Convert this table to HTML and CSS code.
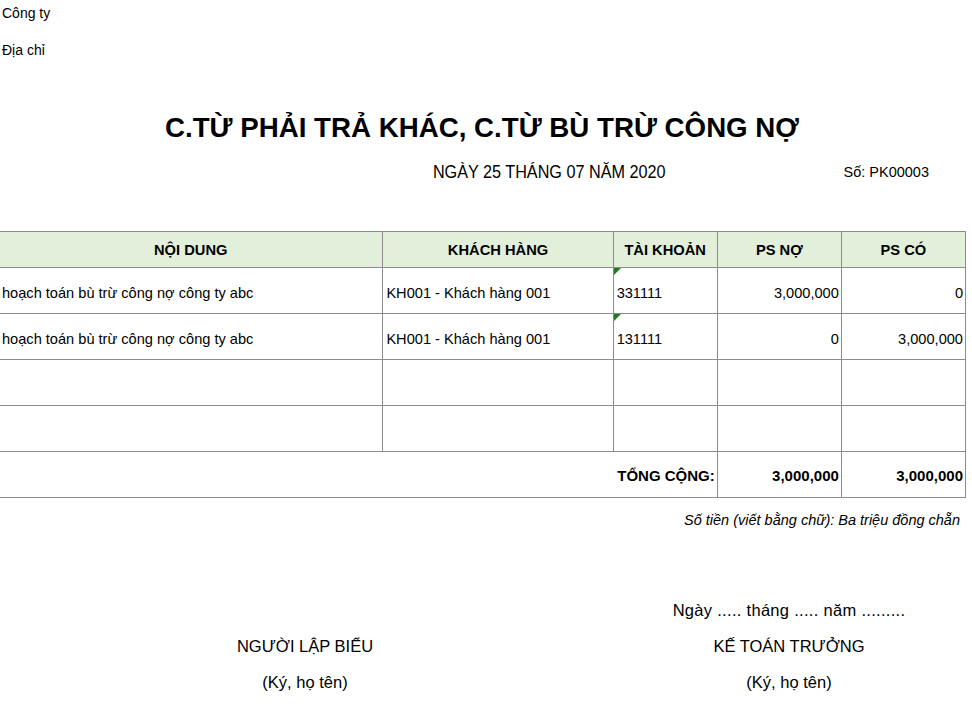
FILE: index.html
```html
<!DOCTYPE html>
<html>
<head>
    <meta charset="utf-8">
    <title>C.TỪ PHẢI TRẢ KHÁC, C.TỪ BÙ TRỪ CÔNG NỢ</title>
    <link rel="stylesheet" href="styles.css">
</head>
<body>
    <div class="sheet">
        <div class="info">Công ty</div>
        <div class="info info-2">Địa chỉ</div>

        <h1 class="title">C.TỪ PHẢI TRẢ KHÁC, C.TỪ BÙ TRỪ CÔNG NỢ</h1>

        <div class="meta">
            <div class="date"><span class="narrow">NGÀY 25 THÁNG 07 NĂM 2020</span></div>
            <div class="voucher">Số: PK00003</div>
        </div>

        <table class="grid">
            <colgroup>
                <col class="c-content">
                <col class="c-customer">
                <col class="c-account">
                <col class="c-money">
                <col class="c-money">
            </colgroup>
            <thead>
                <tr>
                    <th>NỘI DUNG</th>
                    <th>KHÁCH HÀNG</th>
                    <th>TÀI KHOẢN</th>
                    <th>PS NỢ</th>
                    <th>PS CÓ</th>
                </tr>
            </thead>
            <tbody>
                <tr>
                    <td>hoạch toán bù trừ công nợ công ty abc</td>
                    <td>KH001 - Khách hàng 001</td>
                    <td class="acct">331111</td>
                    <td class="num">3,000,000</td>
                    <td class="num">0</td>
                </tr>
                <tr>
                    <td>hoạch toán bù trừ công nợ công ty abc</td>
                    <td>KH001 - Khách hàng 001</td>
                    <td class="acct">131111</td>
                    <td class="num">0</td>
                    <td class="num">3,000,000</td>
                </tr>
                <tr>
                    <td></td><td></td><td></td><td></td><td></td>
                </tr>
                <tr>
                    <td></td><td></td><td></td><td></td><td></td>
                </tr>
                <tr class="total">
                    <td colspan="3" class="num">TỔNG CỘNG:</td>
                    <td class="num">3,000,000</td>
                    <td class="num">3,000,000</td>
                </tr>
            </tbody>
        </table>

        <div class="words">Số tiền (viết bằng chữ): Ba triệu đồng chẵn</div>

        <div class="signs">
            <div class="sign-left">
                <p class="sign-date">&nbsp;</p>
                <p>NGƯỜI LẬP BIỂU</p>
                <p class="sign-note">(Ký, họ tên)</p>
            </div>
            <div class="sign-right">
                <p class="sign-date">Ngày ..... tháng ..... năm .........</p>
                <p>KẾ TOÁN TRƯỞNG</p>
                <p class="sign-note">(Ký, họ tên)</p>
            </div>
        </div>
    </div>
</body>
</html>
```

FILE: styles.css
```css
* {
    margin: 0;
    padding: 0;
}
body {
    background: #fff;
    color: #000;
    font-family: "Liberation Sans", Arial, sans-serif;
    font-size: 14px;
}
.sheet {
    width: 968px;
    margin-left: -2px;
}
/* khong co font Arial Narrow, ep chu lai */
.narrow {
    display: inline-block;
    transform: scaleX(.9);
}

/* dau trang */
.info {
    height: 26px;
    line-height: 26px;
    padding-left: 4px;
}
.info-2 {
    margin-top: 11px;
}
.title {
    margin-top: 45px;
    height: 40px;
    line-height: 40px;
    text-align: center;
    font-size: 27.7px;
    font-weight: bold;
}
.meta {
    display: grid;
    grid-template-columns: 384px 334px 250px;
    margin-top: 12px;
    height: 24px;
    line-height: 24px;
}
.date {
    grid-column: 2;
    text-align: center;
    font-size: 18px;
}
.voucher {
    grid-column: 3;
    text-align: right;
    padding-right: 37px;
    font-size: 14.5px;
}

/* bang */
.grid {
    margin-top: 47px;
    width: 968px;
    border-collapse: collapse;
    table-layout: fixed;
    font-size: 14.6px;
}
.c-content { width: 384px; }
.c-customer { width: 230px; }
.c-account { width: 104px; }
.c-money { width: 124px; }
.grid th,
.grid td {
    border: 1px solid #8c8c8c;
    white-space: nowrap;
    overflow: hidden;
}
.grid th {
    height: 35px;
    background: #e2efda;
    font-size: 14.7px;
    text-align: center;
}
.grid td {
    height: 41px;
    padding: 4px 3px 0 3px;
    text-align: left;
}
.grid tr > :first-child {
    border-left-color: transparent;
}
.grid td.num {
    text-align: right;
    padding-right: 2px;
}
.grid td.acct {
    position: relative;
}
.grid td.acct:before {
    content: "";
    position: absolute;
    left: 0;
    top: 0;
    border-top: 7px solid #1f7a1f;
    border-right: 7px solid transparent;
}
.grid .total td {
    height: 43px;
    font-weight: bold;
    font-size: 15px;
    padding-top: 2px;
}

/* chu ky */
.words {
    margin-top: 10px;
    line-height: 24px;
    text-align: right;
    padding-right: 6px;
    font-style: italic;
    font-size: 14.5px;
}
.signs {
    display: grid;
    grid-template-columns: 614px 354px;
    margin-top: 66px;
    font-size: 16.5px;
    text-align: center;
}
.signs p {
    line-height: 24px;
    margin-bottom: 12px;
}
.signs p.sign-note {
    margin-top: 3px;
}
.sign-date {
    letter-spacing: .3px;
}
```
